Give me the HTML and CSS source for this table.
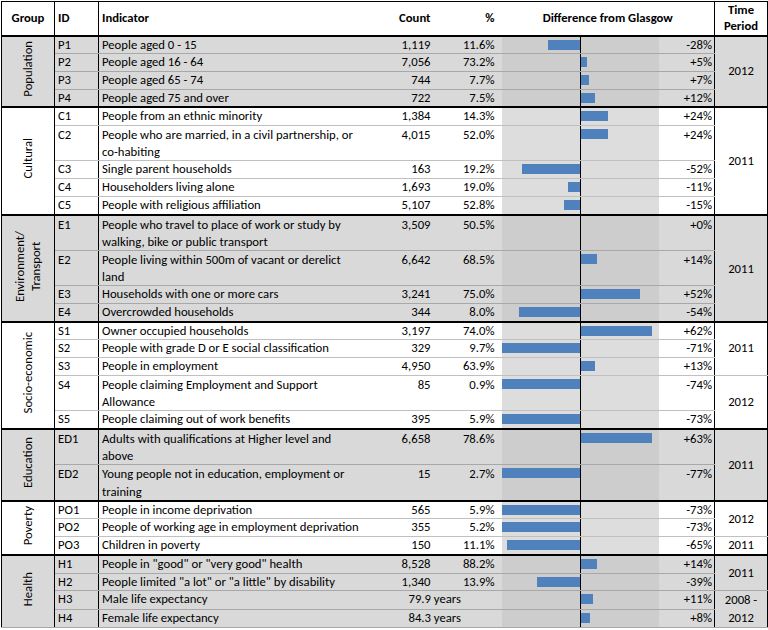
FILE: index.html
```html
<!DOCTYPE html>
<html lang="en">
<head>
<meta charset="utf-8">
<title>Difference from Glasgow</title>
<link rel="stylesheet" href="styles.css">
</head>
<body>
<table class="sheet">
  <colgroup>
    <col class="c-grp"><col class="c-id"><col class="c-ind"><col class="c-cnt"><col class="c-pct"><col class="c-chart"><col class="c-diff"><col class="c-time">
  </colgroup>
  <thead>
    <tr class="head">
      <th class="grp">Group</th>
      <th class="id">ID</th>
      <th class="ind">Indicator</th>
      <th class="cnt">Count</th>
      <th class="pct">%</th>
      <th class="dhead" colspan="2">Difference from Glasgow</th>
      <th class="time">Time<br>Period</th>
    </tr>
  </thead>

  <tbody class="g">
    <tr class="first">
      <td class="grp" rowspan="4"><span class="vert">Population</span></td>
      <td class="id">P1</td><td class="ind">People aged 0 - 15</td><td class="cnt">1,119</td><td class="pct">11.6%</td>
      <td class="chart"><div class="axis"><div class="neg"><i class="bar" style="width:32px"></i></div><div class="pos"></div></div></td>
      <td class="diff">-28%</td>
      <td class="time" rowspan="4">2012</td>
    </tr>
    <tr>
      <td class="id">P2</td><td class="ind">People aged 16 - 64</td><td class="cnt">7,056</td><td class="pct">73.2%</td>
      <td class="chart"><div class="axis"><div class="neg"></div><div class="pos"><i class="bar" style="width:6px"></i></div></div></td>
      <td class="diff">+5%</td>
    </tr>
    <tr>
      <td class="id">P3</td><td class="ind">People aged 65 - 74</td><td class="cnt">744</td><td class="pct">7.7%</td>
      <td class="chart"><div class="axis"><div class="neg"></div><div class="pos"><i class="bar" style="width:8px"></i></div></div></td>
      <td class="diff">+7%</td>
    </tr>
    <tr>
      <td class="id">P4</td><td class="ind">People aged 75 and over</td><td class="cnt">722</td><td class="pct">7.5%</td>
      <td class="chart"><div class="axis"><div class="neg"></div><div class="pos"><i class="bar" style="width:14px"></i></div></div></td>
      <td class="diff">+12%</td>
    </tr>
  </tbody>

  <tbody class="w">
    <tr class="first">
      <td class="grp" rowspan="6"><span class="vert">Cultural</span></td>
      <td class="id">C1</td><td class="ind">People from an ethnic minority</td><td class="cnt">1,384</td><td class="pct">14.3%</td>
      <td class="chart"><div class="axis"><div class="neg"></div><div class="pos"><i class="bar" style="width:27px"></i></div></div></td>
      <td class="diff">+24%</td>
      <td class="time" rowspan="6">2011</td>
    </tr>
    <tr class="dbl">
      <td class="id">C2</td><td class="ind">People who are married, in a civil partnership, or<br>co-habiting</td><td class="cnt">4,015</td><td class="pct">52.0%</td>
      <td class="chart"><div class="axis"><div class="neg"></div><div class="pos"><i class="bar" style="width:27px"></i></div></div></td>
      <td class="diff">+24%</td>
    </tr>
    <tr>
      <td class="id">C3</td><td class="ind">Single parent households</td><td class="cnt">163</td><td class="pct">19.2%</td>
      <td class="chart"><div class="axis"><div class="neg"><i class="bar" style="width:58px"></i></div><div class="pos"></div></div></td>
      <td class="diff">-52%</td>
    </tr>
    <tr>
      <td class="id">C4</td><td class="ind">Householders living alone</td><td class="cnt">1,693</td><td class="pct">19.0%</td>
      <td class="chart"><div class="axis"><div class="neg"><i class="bar" style="width:12px"></i></div><div class="pos"></div></div></td>
      <td class="diff">-11%</td>
    </tr>
    <tr>
      <td class="id">C5</td><td class="ind">People with religious affiliation</td><td class="cnt">5,107</td><td class="pct">52.8%</td>
      <td class="chart"><div class="axis"><div class="neg"><i class="bar" style="width:16px"></i></div><div class="pos"></div></div></td>
      <td class="diff">-15%</td>
    </tr>
  </tbody>

  <tbody class="g">
    <tr class="first dbl">
      <td class="grp" rowspan="4"><span class="vert">Environment/<br>Transport</span></td>
      <td class="id">E1</td><td class="ind">People who travel to place of work or study by<br>walking, bike or public transport</td><td class="cnt">3,509</td><td class="pct">50.5%</td>
      <td class="chart"><div class="axis"><div class="neg"></div><div class="pos"></div></div></td>
      <td class="diff">+0%</td>
      <td class="time" rowspan="4">2011</td>
    </tr>
    <tr class="dbl">
      <td class="id">E2</td><td class="ind">People living within 500m of vacant or derelict<br>land</td><td class="cnt">6,642</td><td class="pct">68.5%</td>
      <td class="chart"><div class="axis"><div class="neg"></div><div class="pos"><i class="bar" style="width:16px"></i></div></div></td>
      <td class="diff">+14%</td>
    </tr>
    <tr>
      <td class="id">E3</td><td class="ind">Households with one or more cars</td><td class="cnt">3,241</td><td class="pct">75.0%</td>
      <td class="chart"><div class="axis"><div class="neg"></div><div class="pos"><i class="bar" style="width:59px"></i></div></div></td>
      <td class="diff">+52%</td>
    </tr>
    <tr>
      <td class="id">E4</td><td class="ind">Overcrowded households</td><td class="cnt">344</td><td class="pct">8.0%</td>
      <td class="chart"><div class="axis"><div class="neg"><i class="bar" style="width:61px"></i></div><div class="pos"></div></div></td>
      <td class="diff">-54%</td>
    </tr>
  </tbody>

  <tbody class="w">
    <tr class="first">
      <td class="grp" rowspan="5"><span class="vert">Socio-economic</span></td>
      <td class="id">S1</td><td class="ind">Owner occupied households</td><td class="cnt">3,197</td><td class="pct">74.0%</td>
      <td class="chart"><div class="axis"><div class="neg"></div><div class="pos"><i class="bar" style="width:71px"></i></div></div></td>
      <td class="diff">+62%</td>
      <td class="time" rowspan="3">2011</td>
    </tr>
    <tr>
      <td class="id">S2</td><td class="ind">People with grade D or E social classification</td><td class="cnt">329</td><td class="pct">9.7%</td>
      <td class="chart"><div class="axis"><div class="neg"><i class="bar" style="width:78px"></i></div><div class="pos"></div></div></td>
      <td class="diff">-71%</td>
    </tr>
    <tr>
      <td class="id">S3</td><td class="ind">People in employment</td><td class="cnt">4,950</td><td class="pct">63.9%</td>
      <td class="chart"><div class="axis"><div class="neg"></div><div class="pos"><i class="bar" style="width:14px"></i></div></div></td>
      <td class="diff">+13%</td>
    </tr>
    <tr class="dbl">
      <td class="id">S4</td><td class="ind">People claiming Employment and Support<br>Allowance</td><td class="cnt">85</td><td class="pct">0.9%</td>
      <td class="chart"><div class="axis"><div class="neg"><i class="bar" style="width:78px"></i></div><div class="pos"></div></div></td>
      <td class="diff">-74%</td>
      <td class="time" rowspan="2">2012</td>
    </tr>
    <tr>
      <td class="id">S5</td><td class="ind">People claiming out of work benefits</td><td class="cnt">395</td><td class="pct">5.9%</td>
      <td class="chart"><div class="axis"><div class="neg"><i class="bar" style="width:78px"></i></div><div class="pos"></div></div></td>
      <td class="diff">-73%</td>
    </tr>
  </tbody>

  <tbody class="g">
    <tr class="first dbl">
      <td class="grp" rowspan="2"><span class="vert">Education</span></td>
      <td class="id">ED1</td><td class="ind">Adults with qualifications at Higher level and<br>above</td><td class="cnt">6,658</td><td class="pct">78.6%</td>
      <td class="chart"><div class="axis"><div class="neg"></div><div class="pos"><i class="bar" style="width:71px"></i></div></div></td>
      <td class="diff">+63%</td>
      <td class="time" rowspan="2">2011</td>
    </tr>
    <tr class="dbl">
      <td class="id">ED2</td><td class="ind">Young people not in education, employment or<br>training</td><td class="cnt">15</td><td class="pct">2.7%</td>
      <td class="chart"><div class="axis"><div class="neg"><i class="bar" style="width:78px"></i></div><div class="pos"></div></div></td>
      <td class="diff">-77%</td>
    </tr>
  </tbody>

  <tbody class="w">
    <tr class="first">
      <td class="grp" rowspan="3"><span class="vert">Poverty</span></td>
      <td class="id">PO1</td><td class="ind">People in income deprivation</td><td class="cnt">565</td><td class="pct">5.9%</td>
      <td class="chart"><div class="axis"><div class="neg"><i class="bar" style="width:78px"></i></div><div class="pos"></div></div></td>
      <td class="diff">-73%</td>
      <td class="time" rowspan="2">2012</td>
    </tr>
    <tr>
      <td class="id">PO2</td><td class="ind">People of working age in employment deprivation</td><td class="cnt">355</td><td class="pct">5.2%</td>
      <td class="chart"><div class="axis"><div class="neg"><i class="bar" style="width:78px"></i></div><div class="pos"></div></div></td>
      <td class="diff">-73%</td>
    </tr>
    <tr>
      <td class="id">PO3</td><td class="ind">Children in poverty</td><td class="cnt">150</td><td class="pct">11.1%</td>
      <td class="chart"><div class="axis"><div class="neg"><i class="bar" style="width:73px"></i></div><div class="pos"></div></div></td>
      <td class="diff">-65%</td>
      <td class="time">2011</td>
    </tr>
  </tbody>

  <tbody class="g">
    <tr class="first">
      <td class="grp" rowspan="4"><span class="vert">Health</span></td>
      <td class="id">H1</td><td class="ind">People in "good" or "very good" health</td><td class="cnt">8,528</td><td class="pct">88.2%</td>
      <td class="chart"><div class="axis"><div class="neg"></div><div class="pos"><i class="bar" style="width:16px"></i></div></div></td>
      <td class="diff">+14%</td>
      <td class="time" rowspan="2">2011</td>
    </tr>
    <tr>
      <td class="id">H2</td><td class="ind">People limited "a lot" or "a little" by disability</td><td class="cnt">1,340</td><td class="pct">13.9%</td>
      <td class="chart"><div class="axis"><div class="neg"><i class="bar" style="width:43px"></i></div><div class="pos"></div></div></td>
      <td class="diff">-39%</td>
    </tr>
    <tr>
      <td class="id">H3</td><td class="ind">Male life expectancy</td><td class="yrs" colspan="2">79.9 years</td>
      <td class="chart"><div class="axis"><div class="neg"></div><div class="pos"><i class="bar" style="width:12px"></i></div></div></td>
      <td class="diff">+11%</td>
      <td class="time time2" rowspan="2">2008 -<br>2012</td>
    </tr>
    <tr class="last">
      <td class="id">H4</td><td class="ind">Female life expectancy</td><td class="yrs" colspan="2">84.3 years</td>
      <td class="chart"><div class="axis"><div class="neg"></div><div class="pos"><i class="bar" style="width:9px"></i></div></div></td>
      <td class="diff">+8%</td>
    </tr>
  </tbody>
</table>
</body>
</html>
```

FILE: styles.css
```css
* { box-sizing: border-box; }

body {
  margin: 0;
  background: #ffffff;
  color: #000000;
  font-family: Carlito, Lato, "Liberation Sans", sans-serif;
  font-size: 12.7px;
}

.sheet {
  border-collapse: collapse;
  table-layout: fixed;
  width: 766px;
  margin: 1px 0 0 1px;
  border: 1px solid #000;
}

.c-grp { width: 53px; }
.c-id { width: 44px; }
.c-ind { width: 285px; }
.c-cnt { width: 53px; }
.c-pct { width: 65px; }
.c-chart { width: 157px; }
.c-diff { width: 56px; }
.c-time { width: 53px; }

th, td {
  padding: 0;
  height: 16px;
  line-height: 16.7px;
  vertical-align: top;
  white-space: nowrap;
  overflow: hidden;
  border-bottom: 1px solid #c0c0c0;
  text-align: left;
}

tr.dbl td { height: 33px; line-height: 17.2px; }

.head th {
  height: 34px;
  line-height: 16px;
  vertical-align: middle;
  font-weight: bold;
  border-bottom: 2px solid #000;
}

.grp {
  text-align: center;
  vertical-align: middle;
  border-right: 1px solid #000;
}

.head .grp { text-align: center; }

.id {
  padding-left: 3px;
  border-right: 1px solid #000;
}

.ind { padding-left: 3px; }

.cnt { text-align: right; padding-right: 6px; }
.pct { text-align: right; padding-right: 7px; }
.head .cnt, .head .pct { text-align: right; }

.head .dhead { text-align: center; border-right: 1px solid #000; }

.diff {
  text-align: right;
  padding-right: 2px;
  border-right: 1px solid #000;
}

.time {
  text-align: center;
  vertical-align: middle;
}

td.time2 { line-height: 18px; }
.head .time { text-align: center; }

.yrs { padding-left: 25px; }

tr.first td { border-top: 2px solid #000; }

.vert {
  display: inline-block;
  writing-mode: vertical-rl;
  transform: rotate(180deg);
  line-height: 16px;
  text-align: center;
}

/* chart column */
.chart {
  padding: 0;
  background:
    linear-gradient(90deg, transparent 78px, #000 78px, #000 79px, transparent 79px),
    #dddddd;
}

.axis {
  display: flex;
  padding-top: 3px;
}

.neg {
  width: 78px;
  display: flex;
  justify-content: flex-end;
}

.pos {
  flex: 1;
  margin-left: 1px;
  display: flex;
}

.bar {
  display: block;
  height: 10px;
  background: #4f81bd;
}

/* grey groups */
.g td { background-color: #d9d9d9; border-bottom-color: #a8a8a8; }
.g td.chart {
  background:
    linear-gradient(90deg, transparent 78px, #000 78px, #000 79px, transparent 79px),
    #cdcdcd;
}
```
